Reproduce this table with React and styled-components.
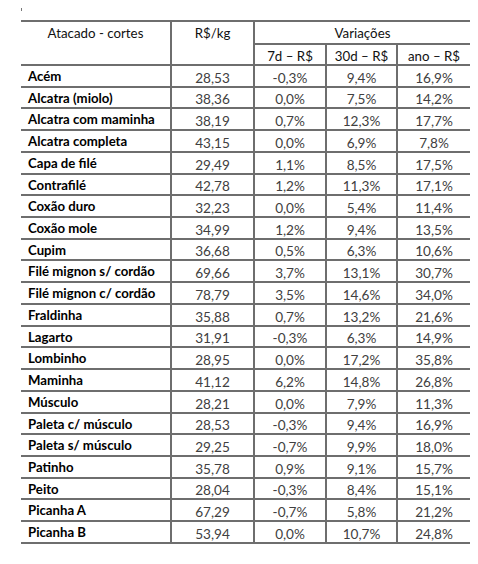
import styled, { createGlobalStyle } from "styled-components";

const GlobalStyle = createGlobalStyle`
  html, body {
    margin: 0;
    padding: 0;
    background: #ffffff;
  }
`;

const Page = styled.div`
  width: 478px;
  height: 564px;
  padding: 8px 0 0 21px;
  box-sizing: border-box;
  font-family: Lato, "Liberation Sans", sans-serif;
`;

const Tick = styled.div`
  width: 1px;
  height: 3px;
  background: #777;
  margin-bottom: 9px;
`;

const Table = styled.table`
  border-collapse: collapse;
  table-layout: fixed;
  width: 449px;
  border-top: 2px solid #6e6e6e;
`;

const Th = styled.th`
  font-weight: 400;
  font-size: 13.3px;
  color: #111;
  text-align: center;
  vertical-align: top;
  padding: 3px 0 0;
  height: ${(p) => p.$h || 21}px;
  border-bottom: 2px solid #6e6e6e;
  border-left: ${(p) => (p.$first ? "none" : "2px solid #6e6e6e")};
  box-sizing: border-box;
`;

const Row = styled.tr`
  height: 21.73px;
`;

const Name = styled.td`
  font-weight: 700;
  font-size: 13.2px;
  color: #000;
  text-align: left;
  vertical-align: top;
  padding: 2px 0 0 7px;
  white-space: nowrap;
  border-bottom: 2px solid #6e6e6e;
`;

const Num = styled.td`
  font-size: 13.6px;
  color: #404040;
  text-align: center;
  vertical-align: bottom;
  padding: 0 0 0;
  border-bottom: 2px solid #6e6e6e;
  border-left: 2px solid #6e6e6e;
`;

const rows = [
  ["Acém", "28,53", "-0,3%", "9,4%", "16,9%"],
  ["Alcatra (miolo)", "38,36", "0,0%", "7,5%", "14,2%"],
  ["Alcatra com maminha", "38,19", "0,7%", "12,3%", "17,7%"],
  ["Alcatra completa", "43,15", "0,0%", "6,9%", "7,8%"],
  ["Capa de filé", "29,49", "1,1%", "8,5%", "17,5%"],
  ["Contrafilé", "42,78", "1,2%", "11,3%", "17,1%"],
  ["Coxão duro", "32,23", "0,0%", "5,4%", "11,4%"],
  ["Coxão mole", "34,99", "1,2%", "9,4%", "13,5%"],
  ["Cupim", "36,68", "0,5%", "6,3%", "10,6%"],
  ["Filé mignon s/ cordão", "69,66", "3,7%", "13,1%", "30,7%"],
  ["Filé mignon c/ cordão", "78,79", "3,5%", "14,6%", "34,0%"],
  ["Fraldinha", "35,88", "0,7%", "13,2%", "21,6%"],
  ["Lagarto", "31,91", "-0,3%", "6,3%", "14,9%"],
  ["Lombinho", "28,95", "0,0%", "17,2%", "35,8%"],
  ["Maminha", "41,12", "6,2%", "14,8%", "26,8%"],
  ["Músculo", "28,21", "0,0%", "7,9%", "11,3%"],
  ["Paleta c/ músculo", "28,53", "-0,3%", "9,4%", "16,9%"],
  ["Paleta s/ músculo", "29,25", "-0,7%", "9,9%", "18,0%"],
  ["Patinho", "35,78", "0,9%", "9,1%", "15,7%"],
  ["Peito", "28,04", "-0,3%", "8,4%", "15,1%"],
  ["Picanha A", "67,29", "-0,7%", "5,8%", "21,2%"],
  ["Picanha B", "53,94", "0,0%", "10,7%", "24,8%"],
];

export default function App() {
  return (
    <>
      <GlobalStyle />
      <Page>
        <Tick />
        <Table>
          <colgroup>
            <col style={{ width: 150 }} />
            <col style={{ width: 83 }} />
            <col style={{ width: 72 }} />
            <col style={{ width: 71 }} />
            <col style={{ width: 73 }} />
          </colgroup>
          <thead>
            <tr>
              <Th $first rowSpan={2}>Atacado - cortes</Th>
              <Th rowSpan={2}>R$/kg</Th>
              <Th colSpan={3} $h={23}>Variações</Th>
            </tr>
            <tr>
              <Th $h={21}>7d – R$</Th>
              <Th $h={21}>30d – R$</Th>
              <Th $h={21}>ano – R$</Th>
            </tr>
          </thead>
          <tbody>
            {rows.map((r) => (
              <Row key={r[0]}>
                <Name>{r[0]}</Name>
                {r.slice(1).map((v, i) => (
                  <Num key={i}>{v}</Num>
                ))}
              </Row>
            ))}
          </tbody>
        </Table>
      </Page>
    </>
  );
}
